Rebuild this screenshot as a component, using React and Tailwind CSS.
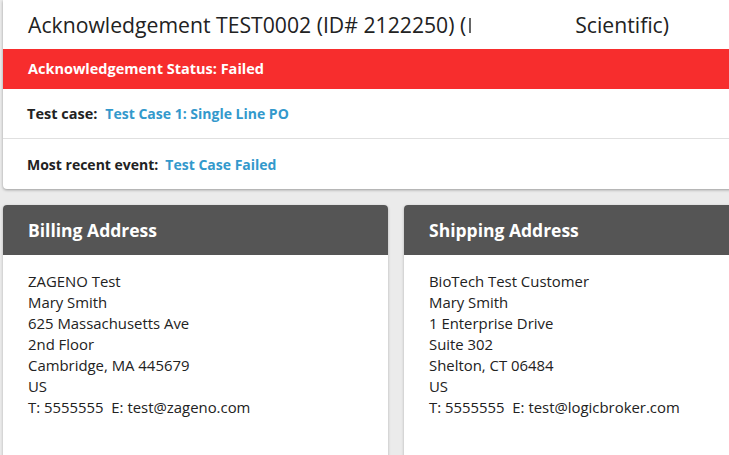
export default function App() {
  const billing = [
    "ZAGENO Test",
    "Mary Smith",
    "625 Massachusetts Ave",
    "2nd Floor",
    "Cambridge, MA 445679",
    "US",
  ];
  const shipping = [
    "BioTech Test Customer",
    "Mary Smith",
    "1 Enterprise Drive",
    "Suite 302",
    "Shelton, CT 06484",
    "US",
  ];
  const Card = ({ title, lines, phone, email }) => (
    <div className="w-[385px] shrink-0 rounded-t-[4px] bg-white shadow-[0_1px_3px_rgba(0,0,0,0.25)] h-[260px]">
      <div className="h-[50px] rounded-t-[4px] bg-[#555555] flex items-center pl-[25px]">
        <span className="text-white font-bold text-[17.5px]">{title}</span>
      </div>
      <div className="pl-[25px] pt-[16px] text-[14.9px] leading-[21px] text-[#222]">
        {lines.map((l) => (
          <div key={l}>{l}</div>
        ))}
        <div>
          T: {phone}&nbsp;&nbsp;E: {email}
        </div>
      </div>
    </div>
  );
  return (
    <div
      className="w-[729px] h-[455px] overflow-hidden bg-[#ebebeb]"
      style={{ fontFamily: '"Open Sans", "DejaVu Sans", sans-serif' }}
    >
      <div className="w-[800px] pl-[3px]">
        <div className="bg-white rounded-b-[4px] shadow-[0_1px_3px_rgba(0,0,0,0.35)]">
          <div className="h-[49px] flex items-center pl-[25px] text-[21.2px] text-[#222] whitespace-nowrap">
            <span>Acknowledgement TEST0002 (ID# 2122250) (</span>
            <span className="ml-[3px] inline-block w-[2px] h-[15px] bg-[#666] mt-[2px]"></span>
            <span className="w-[104px] shrink-0"></span>
            <span>Scientific)</span>
          </div>
          <div className="h-[40px] bg-[#f72d2d] flex items-center pl-[25px] text-white font-bold text-[14.5px]">
            Acknowledgement Status: Failed
          </div>
          <div className="h-[50px] flex items-center pl-[24px] text-[14px] font-bold border-b border-[#e0e0e0]">
            <span className="text-[#222] text-[14.5px]">Test case:</span>
            <span className="ml-[8px] text-[#3399cc]">Test Case 1: Single Line PO</span>
          </div>
          <div className="h-[50px] flex items-center pl-[24px] text-[14px] font-bold">
            <span className="text-[#222]">Most recent event:</span>
            <span className="ml-[7px] text-[#3399cc]">Test Case Failed</span>
          </div>
        </div>
        <div className="mt-[16px] flex gap-[16px]">
          <Card title="Billing Address" lines={billing} phone="5555555" email="test@zageno.com" />
          <Card title="Shipping Address" lines={shipping} phone="5555555" email="test@logicbroker.com" />
        </div>
      </div>
    </div>
  );
}
